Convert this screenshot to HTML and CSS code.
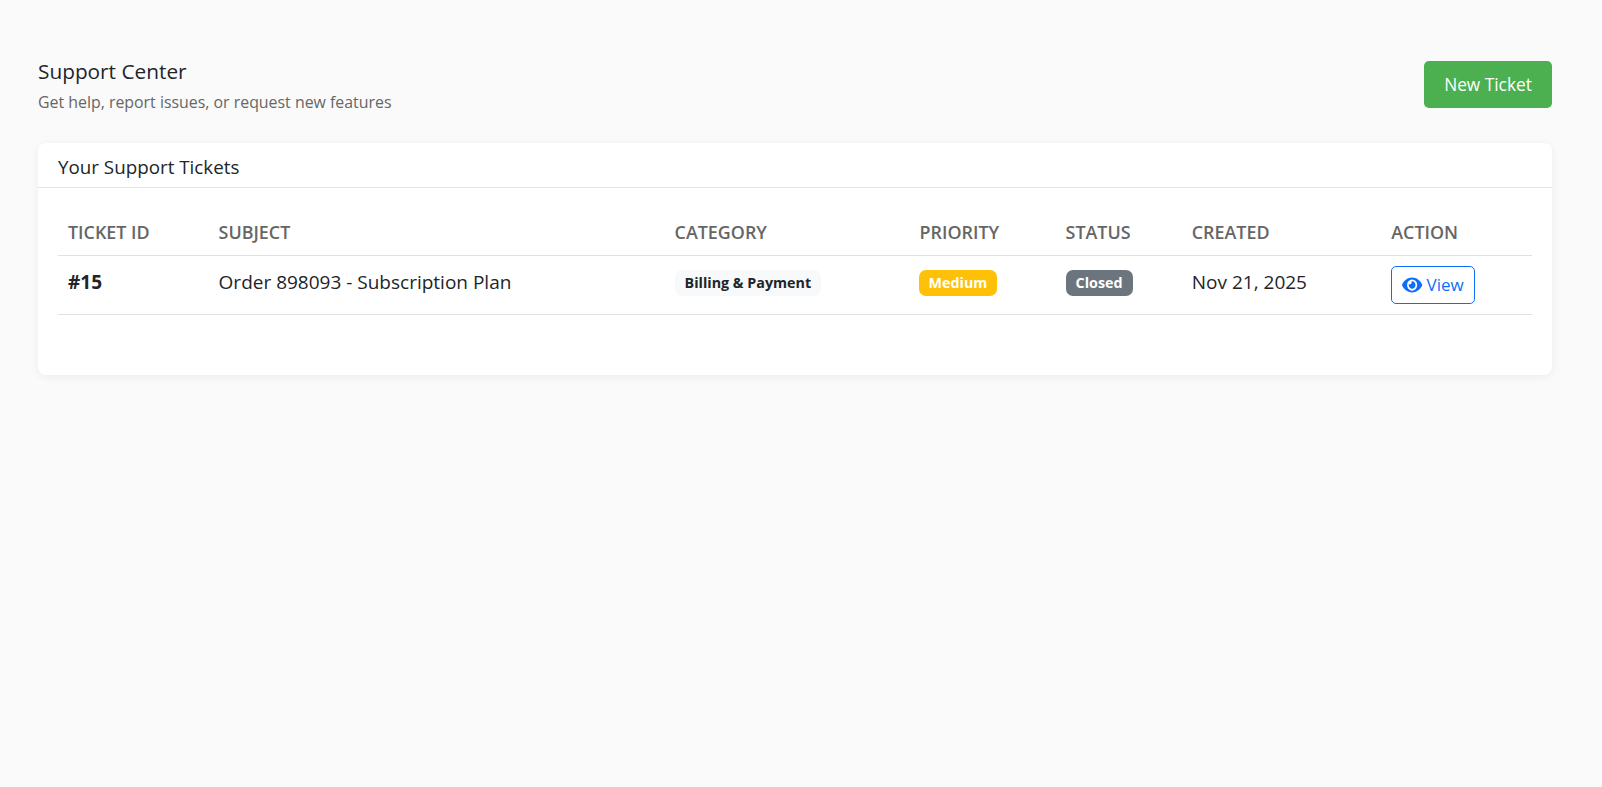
FILE: index.html
```html
<!DOCTYPE html>
<html lang="en">
<head>
<meta charset="utf-8">
<title>Support Center</title>
<link rel="stylesheet" href="styles.css">
</head>
<body>
<main class="page">
  <header class="page-head">
    <div>
      <h1 class="page-title">Support Center</h1>
      <p class="page-sub">Get help, report issues, or request new features</p>
    </div>
    <button class="btn-new" type="button">New Ticket</button>
  </header>
  <section class="card">
    <h2 class="card-head">Your Support Tickets</h2>
    <div class="card-body">
      <table class="tickets">
        <colgroup>
          <col class="c-id"><col class="c-subject"><col class="c-cat"><col class="c-pri"><col class="c-status"><col class="c-created"><col class="c-action">
        </colgroup>
        <thead>
          <tr><th>TICKET ID</th><th>SUBJECT</th><th>CATEGORY</th><th>PRIORITY</th><th>STATUS</th><th>CREATED</th><th>ACTION</th></tr>
        </thead>
        <tbody>
          <tr>
            <td class="id">#15</td>
            <td>Order 898093 - Subscription Plan</td>
            <td><span class="badge light">Billing &amp; Payment</span></td>
            <td><span class="badge yellow">Medium</span></td>
            <td><span class="badge gray">Closed</span></td>
            <td>Nov 21, 2025</td>
            <td><a class="btn-view" href="#"><svg class="eye" viewBox="0 0 576 512" preserveAspectRatio="none" aria-hidden="true"><path fill="currentColor" d="M572.52 241.4C518.29 135.59 410.93 64 288 64S57.68 135.64 3.48 241.41a32.35 32.35 0 0 0 0 29.19C57.71 376.41 165.07 448 288 448s230.32-71.64 284.52-177.41a32.35 32.35 0 0 0 0-29.19zM288 400a144 144 0 1 1 144-144 143.93 143.93 0 0 1-144 144zm0-240a95.31 95.31 0 0 0-25.31 3.79 47.85 47.85 0 0 1-66.9 66.9A95.78 95.78 0 1 0 288 160z"/></svg>View</a></td>
          </tr>
        </tbody>
      </table>
    </div>
  </section>
</main>
</body>
</html>
```
FILE: styles.css
```css
* { box-sizing: border-box; }
html, body { margin: 0; height: 100%; }
body {
  background: #fafafa;
  color: #212529;
  font-family: "Open Sans", "Noto Sans", sans-serif;
  font-size: 17px;
}
.page { padding: 59px 50px 0 38px; }
.page-head {
  display: flex;
  justify-content: space-between;
  align-items: flex-start;
  margin-bottom: 30px;
}
.page-title { margin: 0; font-size: 20.8px; font-weight: 400; line-height: 24px; color: #212529; }
.page-sub { margin: 9px 0 0; font-size: 15.9px; line-height: 21px; color: #666; }
.btn-new {
  width: 128px;
  height: 47px;
  margin-top: 2px;
  border: 0;
  border-radius: 5px;
  background: #4caf50;
  color: #fff;
  font: inherit;
  font-size: 17.3px;
}
.card {
  height: 232px;
  background: #fff;
  border-radius: 8px;
  box-shadow: 0 2px 8px rgba(0, 0, 0, .06);
}
.card-head {
  margin: 0;
  height: 45px;
  padding: 12px 20px 8px;
  border-bottom: 1px solid #e3e3e3;
  font-size: 18.8px;
  font-weight: 400;
  line-height: 24px;
}
.card-body { padding: 19px 20px 0; }
.tickets { width: 100%; table-layout: fixed; border-collapse: collapse; }
.c-id { width: 150.6px; }
.c-subject { width: 456px; }
.c-cat { width: 245px; }
.c-pri { width: 146px; }
.c-status { width: 126.2px; }
.c-created { width: 199.5px; }
.tickets th {
  padding: 12px 10px 9px;
  height: 48px;
  border-bottom: 1px solid #dee2e6;
  text-align: left;
  font-size: 17.9px;
  font-weight: 600;
  color: #666;
}
.tickets td {
  padding: 10px;
  height: 59px;
  border-bottom: 1px solid #dee2e6;
  vertical-align: top;
  font-size: 19px;
  line-height: 32px;
  white-space: nowrap;
}
.tickets td.id { font-weight: 700; }
.badge {
  display: block;
  width: fit-content;
  height: 26px;
  margin-top: 4px;
  padding: 0 10px;
  border-radius: 7px;
  font-size: 14.3px;
  font-weight: 700;
  line-height: 26px;
}
.yellow { margin-left: -1px; }
.light { background: #f8f9fa; color: #212529; }
.yellow { background: #ffc107; color: #fff; }
.gray { background: #6c757d; color: #fff; }
.btn-view {
  display: flex;
  width: fit-content;
  align-items: center;
  gap: 4px;
  height: 38px;
  padding: 0 10px;
  border: 1px solid #0d6efd;
  border-radius: 5px;
  color: #0d6efd;
  font-size: 17px;
  line-height: 24px;
  text-decoration: none;
}
.eye { width: 20.25px; height: 20px; }
```
